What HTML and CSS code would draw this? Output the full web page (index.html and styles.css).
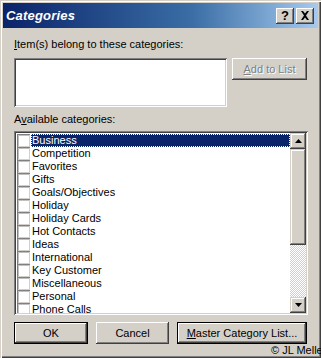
FILE: index.html
```html
<!DOCTYPE html>
<html>
<head>
<meta charset="utf-8">
<link rel="stylesheet" href="styles.css">
</head>
<body>
<div class="window">
  <div class="titlebar">
    <span class="title">Categories</span>
    <div class="tbtns">
      <div class="tbtn help">?</div>
      <div class="tbtn close">
        <svg width="10" height="9" viewBox="0 0 10 9"><path d="M1 0h2l2 2.5L7 0h2L6 4.5 9 9H7L5 6.5 3 9H1l3-4.5z" fill="#000"/></svg>
      </div>
    </div>
  </div>
  <div class="content">
    <div class="lbl lbl1"><u>I</u>tem(s) belong to these categories:</div>
    <div class="row1">
      <div class="field"></div>
      <div class="btn disabled"><span><u>A</u>dd to List</span></div>
    </div>
    <div class="lbl lbl2">A<u>v</u>ailable categories:</div>
    <div class="listbox">
      <div class="items">
        <div class="item sel"><span class="cb"></span><span class="txt">Business</span></div>
        <div class="item"><span class="cb"></span><span class="txt">Competition</span></div>
        <div class="item"><span class="cb"></span><span class="txt">Favorites</span></div>
        <div class="item"><span class="cb"></span><span class="txt">Gifts</span></div>
        <div class="item"><span class="cb"></span><span class="txt">Goals/Objectives</span></div>
        <div class="item"><span class="cb"></span><span class="txt">Holiday</span></div>
        <div class="item"><span class="cb"></span><span class="txt">Holiday Cards</span></div>
        <div class="item"><span class="cb"></span><span class="txt">Hot Contacts</span></div>
        <div class="item"><span class="cb"></span><span class="txt">Ideas</span></div>
        <div class="item"><span class="cb"></span><span class="txt">International</span></div>
        <div class="item"><span class="cb"></span><span class="txt">Key Customer</span></div>
        <div class="item"><span class="cb"></span><span class="txt">Miscellaneous</span></div>
        <div class="item"><span class="cb"></span><span class="txt">Personal</span></div>
        <div class="item"><span class="cb"></span><span class="txt">Phone Calls</span></div>
      </div>
      <div class="scroll">
        <div class="sbtn"><svg width="7" height="4" viewBox="0 0 7 4"><path d="M3.5 0L7 4H0z" fill="#000"/></svg></div>
        <div class="thumb"></div>
        <div class="track"></div>
        <div class="sbtn"><svg width="7" height="4" viewBox="0 0 7 4"><path d="M0 0h7L3.5 4z" fill="#000"/></svg></div>
      </div>
    </div>
    <div class="buttons">
      <div class="btn def ok">OK</div>
      <div class="btn cancel">Cancel</div>
      <div class="btn def master"><span><u>M</u>aster Category List...</span></div>
    </div>
  </div>
  <div class="copy">© JL Meller</div>
</div>
</body>
</html>
```
FILE: styles.css
```css
html, body {
  margin: 0;
  padding: 0;
  background: #d4d0c8;
}
.window {
  position: relative;
  width: 321px;
  height: 358px;
  box-sizing: border-box;
  padding: 3px;
  background: #d4d0c8;
  box-shadow: inset 1px 1px 0 #d4d0c8, inset 2px 2px 0 #fff, inset -1px -1px 0 #404040, inset -2px -2px 0 #808080;
  font-family: "Liberation Sans", Arial, sans-serif;
  font-size: 11px;
  color: #000;
  overflow: hidden;
}
.titlebar {
  height: 25px;
  background: linear-gradient(to right, #0a246a 0%, #3a6ea5 60%, #a6caf0 100%);
  display: flex;
  align-items: center;
  justify-content: space-between;
  padding: 0 4px 0 3px;
}
.title {
  color: #fff;
  font-weight: bold;
  font-style: italic;
  font-size: 13px;
  letter-spacing: 0.2px;
}
.tbtns {
  display: flex;
  gap: 2px;
}
.tbtn {
  width: 18px;
  height: 16px;
  box-sizing: border-box;
  background: #d4d0c8;
  box-shadow: inset -1px -1px 0 #404040, inset 1px 1px 0 #fff, inset -2px -2px 0 #808080;
  display: flex;
  align-items: center;
  justify-content: center;
  font-weight: bold;
  font-size: 13px;
  line-height: 1;
}
.content {
  padding: 0 10px 0 11px;
}
.lbl {
  height: 13px;
  line-height: 13px;
  white-space: nowrap;
}
.lbl1 { margin-top: 10px; }
.lbl2 { margin-top: 6px; }
.row1 {
  margin-top: 7px;
  display: flex;
  align-items: flex-start;
  gap: 5px;
}
.field {
  width: 213px;
  height: 49px;
  background: #fff;
  box-shadow: inset 1px 1px 0 #808080, inset -1px -1px 0 #fff, inset 2px 2px 0 #404040, inset -2px -2px 0 #d4d0c8;
}
.btn {
  box-sizing: border-box;
  height: 22px;
  background: #d4d0c8;
  box-shadow: inset -1px -1px 0 #404040, inset 1px 1px 0 #fff, inset -2px -2px 0 #808080;
  display: flex;
  align-items: center;
  justify-content: center;
  white-space: nowrap;
}
.btn.def {
  border: 1px solid #000;
}
.btn.disabled {
  width: 75px;
  color: #808080;
  text-shadow: 1px 1px 0 #fff;
}
.listbox {
  margin-top: 5px;
  width: 294px;
  height: 184px;
  box-sizing: border-box;
  padding: 2px;
  background: #fff;
  box-shadow: inset 1px 1px 0 #808080, inset -1px -1px 0 #fff, inset 2px 2px 0 #404040, inset -2px -2px 0 #d4d0c8;
  display: flex;
}
.items {
  flex: 1;
  overflow: hidden;
  padding-top: 1px;
}
.item {
  height: 13px;
  display: flex;
  align-items: center;
}
.cb {
  width: 13px;
  height: 13px;
  box-sizing: border-box;
  margin-left: 1px;
  margin-right: 1px;
  background: #fff;
  box-shadow: inset 1px 1px 0 #808080, inset -1px -1px 0 #d4d0c8, inset 2px 2px 0 #c0c0c0;
  flex: none;
}
.txt {
  flex: 1;
  height: 13px;
  line-height: 13px;
  padding-left: 1px;
  white-space: nowrap;
  box-sizing: border-box;
}
.sel .txt {
  background: #0a246a;
  color: #fff;
  outline: 1px dotted #fff;
  outline-offset: -1px;
}
.scroll {
  width: 16px;
  display: flex;
  flex-direction: column;
}
.sbtn {
  height: 16px;
  box-sizing: border-box;
  background: #d4d0c8;
  box-shadow: inset -1px -1px 0 #404040, inset 1px 1px 0 #d4d0c8, inset -2px -2px 0 #808080, inset 2px 2px 0 #fff;
  display: flex;
  align-items: center;
  justify-content: center;
  flex: none;
}
.thumb {
  height: 96px;
  background: #d4d0c8;
  box-shadow: inset -1px -1px 0 #404040, inset 1px 1px 0 #d4d0c8, inset -2px -2px 0 #808080, inset 2px 2px 0 #fff;
  flex: none;
}
.track {
  flex: 1;
  background-color: #d4d0c8;
  background-image: repeating-conic-gradient(#ffffff 0 25%, #d4d0c8 0 50%);
  background-size: 2px 2px;
}
.buttons {
  margin-top: 7px;
  display: flex;
  gap: 8px;
}
.ok { width: 74px; }
.cancel { width: 73px; }
.master { width: 130px; }
.copy {
  position: absolute;
  left: 271px;
  top: 344px;
  font-size: 11px;
  line-height: 12px;
  white-space: nowrap;
}
```
